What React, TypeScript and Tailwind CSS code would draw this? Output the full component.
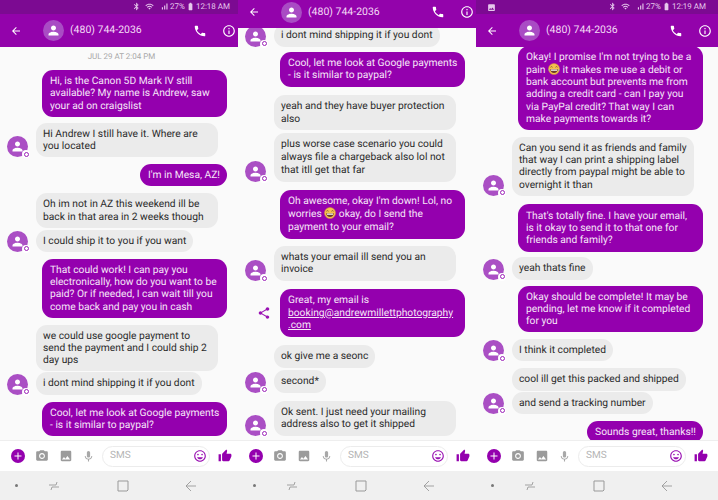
import type { ReactNode } from 'react';
import {
  MdArrowBack,
  MdBluetooth,
  MdCameraAlt,
  MdInfoOutline,
  MdMic,
  MdPerson,
  MdPhone,
  MdPhoto,
  MdShare,
  MdSignalCellularAlt,
  MdTagFaces,
  MdThumbUp,
  MdWifi,
  MdAdd,
  MdBatteryStd,
  MdImage,
} from 'react-icons/md';

function Laugh({ tears = false }: { tears?: boolean }) {
  return (
    <svg viewBox="0 0 24 24" className="inline-block w-[12px] h-[12px] align-[-2px]">
      <circle cx="12" cy="12" r="11" fill="#f4c14d" stroke="#d9963a" strokeWidth="1" />
      <path d="M5 8.5q2-2.5 4 0M15 8.5q2-2.5 4 0" fill="none" stroke="#6b4a2a" strokeWidth="1.6" />
      <path d="M4.5 12.5h15q-.8 7.5-7.5 7.5t-7.5-7.5z" fill="#6b3a2a" />
      <path d="M6 13h12v2.5H6z" fill="#fff" />
      {tears && <path d="M1 11q2 2 3 5-3 0-3-5zM23 11q-2 2-3 5 3 0 3-5z" fill="#6cb6e8" />}
    </svg>
  );
}

function Avatar({ size = 'small' }: { size?: 'small' | 'header' }) {
  if (size === 'header') {
    return (
      <div className="w-[21px] h-[21px] rounded-full bg-[#a94cc4] flex items-center justify-center text-white">
        <MdPerson size={15} />
      </div>
    );
  }
  return (
    <div className="relative w-[21px] h-[21px] rounded-full bg-[#aa4fc4] flex items-center justify-center text-white shrink-0">
      <MdPerson size={15} />
      <div className="absolute right-[-2px] bottom-[-1px] w-[8px] h-[8px] rounded-full bg-white flex items-center justify-center">
        <div className="w-[5px] h-[5px] rounded-full border border-[#9b22b8]" />
      </div>
    </div>
  );
}

function In({ children, avatar, full, className }: { children: ReactNode; avatar?: boolean; full?: boolean; className: string }) {
  return (
    <div className={`flex items-end pl-[7px] gap-[8px] shrink-0 ${className}`}>
      <div className="w-[21px] shrink-0">{avatar && <Avatar />}</div>
      <div className={`bg-[#ebebeb] text-[#2a2a2a] rounded-[11px] px-[7px] py-[5px] whitespace-nowrap ${full ? 'w-[182px]' : ''}`}>{children}</div>
    </div>
  );
}

function Out({ children, className, share, full }: { children: ReactNode; className: string; share?: boolean; full?: boolean }) {
  return (
    <div className={`flex items-center justify-end gap-[9px] w-[238px] pr-[11px] shrink-0 ${className}`}>
      {share && <MdShare size={14} className="text-[#9a12b3]" />}
      <div className={`bg-[#9400ae] text-[#f6e6f8] rounded-[11px] pl-[8px] pr-[7px] py-[5px] whitespace-nowrap ${full ? 'w-[185px]' : ''}`}>{children}</div>
    </div>
  );
}

function StatusBar({ time, image }: { time: string; image?: boolean }) {
  return (
    <div className="h-[14px] bg-[#7c0a92] text-[#e6c8ec] flex items-center w-full pl-[11px] shrink-0">
      {image && <MdImage size={9} />}
      <div className="w-[238px] absolute left-0 flex items-center justify-end pr-[8px] gap-[1px] text-[8px]">
        <MdBluetooth size={9} />
        <MdWifi size={9} className="ml-[3px]" />
        <MdSignalCellularAlt size={9} className="ml-[5px]" />
        <span>27%</span>
        <MdBatteryStd size={9} />
        <span>{time}</span>
      </div>
    </div>
  );
}

function Header({ short }: { short?: boolean }) {
  return (
    <div className={`bg-[#9303ab] text-white flex items-center shrink-0 whitespace-nowrap ${short ? 'h-[28px] pb-[4px]' : 'h-[33px]'}`}>
      <MdArrowBack size={12} className="ml-[10px]" />
      <div className="ml-[21px]">
        <Avatar size="header" />
      </div>
      <span className="ml-[6px] w-[71px] text-[10.5px] text-[#f3dcf6]">(480) 744-2036</span>
      <MdPhone size={14} className="ml-[52px]" />
      <MdInfoOutline size={14} className="ml-[15px]" />
    </div>
  );
}

function Composer() {
  return (
    <div className="shrink-0">
      <div className="h-[31px] bg-white border-t border-[#eeeeee] flex items-center">
        <div className="ml-[11px] w-[14px] h-[14px] rounded-full bg-[#9400ae] flex items-center justify-center text-white">
          <MdAdd size={12} />
        </div>
        <MdCameraAlt size={14} className="ml-[10px] text-[#9b9b9b]" />
        <MdPhoto size={14} className="ml-[10px] text-[#9b9b9b]" />
        <MdMic size={13} className="ml-[9px] text-[#a8a8a8]" />
        <div className="ml-[7px] w-[108px] h-[21px] rounded-full border border-[#ececec] flex items-center justify-between pl-[7px] pr-[2px] text-[10px] text-[#b5b5b5]">
          <span>SMS</span>
          <MdTagFaces size={14} className="text-[#9a12b3]" />
        </div>
        <MdThumbUp size={14} className="ml-[8px] text-[#9400ae]" />
      </div>
      <div className="h-[29px] bg-[#f0f0f0] flex items-center text-[#8f8f8f]">
        <div className="ml-[15px] w-[3px] h-[3px] rounded-full bg-[#777777]" />
        <svg viewBox="0 0 12 12" className="ml-[30px] w-[12px] h-[12px]" fill="none" stroke="#999999" strokeWidth="0.9">
          <path d="M1 5h7l1-3M11 7H4l-1 3" />
        </svg>
        <svg viewBox="0 0 12 12" className="ml-[57px] w-[12px] h-[12px]" fill="none" stroke="#999999" strokeWidth="1">
          <path d="M1 1h10v9l-1 1H1z" />
        </svg>
        <svg viewBox="0 0 12 12" className="ml-[56px] w-[12px] h-[12px]" fill="none" stroke="#999999" strokeWidth="0.9">
          <path d="M6 1L1 6l5 5M1 6h10" />
        </svg>
      </div>
    </div>
  );
}

function Panel({ children, className, status, short }: { children: ReactNode; className: string; status?: ReactNode; short?: boolean }) {
  return (
    <div className={`relative h-[500px] flex flex-col overflow-hidden bg-[#fafafa] ${className}`}>
      {status}
      <Header short={short} />
      <div className="flex-1 min-h-0 flex flex-col justify-end overflow-hidden">{children}</div>
      <Composer />
    </div>
  );
}

export default function App() {
  return (
    <div className="w-[718px] h-[500px] flex overflow-hidden text-[10.25px] [text-rendering:geometricPrecision]" style={{ fontFamily: 'Roboto, sans-serif' }}>
      <Panel className="w-[238px] leading-[12.2px]" status={<StatusBar time="12:18 AM" />}>
        <div className="text-center text-[8px] text-[#a8a8a8] leading-[10px] mb-[8px] pl-[5px] shrink-0">JUL 29 AT 2:04 PM</div>
        <Out full className="mt-0">Hi, is the Canon 5D Mark IV still<br />available? My name is Andrew, saw<br />your ad on craigslist</Out>
        <In full avatar className="mt-[6px]">Hi Andrew I still have it. Where are<br />you located</In>
        <Out className="mt-[7px]">I'm in Mesa, AZ!</Out>
        <In full className="mt-[7px]">Oh im not in AZ this weekend ill be<br />back in that area in 2 weeks though</In>
        <In avatar className="mt-[2px]">I could ship it to you if you want</In>
        <Out full className="mt-[7px]">That could work! I can pay you<br />electronically, how do you want to be<br />paid? Or if needed, I can wait till you<br />come back and pay you in cash</Out>
        <In full className="mt-[7px]">we could use google payment to<br />send the payment and I could ship 2<br />day ups</In>
        <In avatar className="mt-[1px]">i dont mind shipping it if you dont</In>
        <Out full className="mt-[7px] mb-[4px]">Cool, let me look at Google payments<br />- is it similar to paypal?</Out>
      </Panel>

      <Panel className="w-[238px] leading-[12.7px]" short>
        <In avatar className="mt-0">i dont mind shipping it if you dont</In>
        <Out full className="mt-[5px]">Cool, let me look at Google payments<br />- is it similar to paypal?</Out>
        <In full className="mt-[8px]">yeah and they have buyer protection<br />also</In>
        <In full avatar className="mt-[3px]">plus worse case scenario you could<br />always file a chargeback also lol not<br />that itll get that far</In>
        <Out full className="mt-[8px]">Oh awesome, okay I'm down! Lol, no<br />worries <Laugh /> okay, do I send the<br />payment to your email?</Out>
        <In full avatar className="mt-[7px]">whats your email ill send you an<br />invoice</In>
        <Out full share className="mt-[8px]">Great, my email is<br /><span className="underline">booking@andrewmillettphotography<br />.com</span></Out>
        <In className="mt-[8px]">ok give me a seonc</In>
        <In avatar className="mt-[2px]">second*</In>
        <In full avatar className="mt-[8px] mb-[4px]">Ok sent. I just need your mailing<br />address also to get it shipped</In>
      </Panel>

      <Panel className="w-[242px] leading-[12.2px]" status={<StatusBar time="12:19 AM" image />}>
        <Out full className="mt-0">Okay! I promise I'm not trying to be a<br />pain <Laugh tears /> it makes me use a debit or<br />bank account but prevents me from<br />adding a credit card - can I pay you<br />via PayPal credit? That way I can<br />make payments towards it?</Out>
        <In full avatar className="mt-[7px]">Can you send it as friends and family<br />that way I can print a shipping label<br />directly from paypal might be able to<br />overnight it than</In>
        <Out full className="mt-[8px]"><div className="py-[1px]">That's totally fine. I have your email,<br />is it okay to send it to that one for<br />friends and family?</div></Out>
        <In avatar className="mt-[5px]">yeah thats fine</In>
        <Out full className="mt-[6px]">Okay should be complete! It may be<br />pending, let me know if it completed<br />for you</Out>
        <In avatar className="mt-[7px]">I think it completed</In>
        <In className="mt-[7px]">cool ill get this packed and shipped</In>
        <In avatar className="mt-[1px]">and send a tracking number</In>
        <Out className="mt-[7px] mb-[-3px]">Sounds great, thanks!!</Out>
      </Panel>
    </div>
  );
}
